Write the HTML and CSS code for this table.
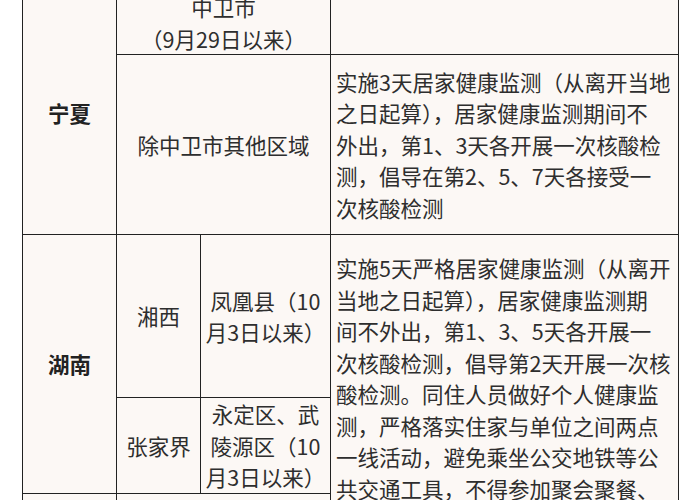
FILE: index.html
```html
<!DOCTYPE html>
<html lang="zh-CN">
<head>
<meta charset="utf-8">
<title>各地健康监测措施</title>
<link rel="stylesheet" href="styles.css">
</head>
<body>
<div class="page">
  <table class="policy">
    <colgroup>
      <col class="c-prov">
      <col class="c-city">
      <col class="c-area">
      <col class="c-text">
    </colgroup>
    <tbody>
      <tr class="r-a">
        <td class="prov" rowspan="2">宁夏</td>
        <td colspan="2">中卫市<br>（9月29日以来）</td>
        <td class="txt"></td>
      </tr>
      <tr class="r-b">
        <td colspan="2">除中卫市其他区域</td>
        <td class="txt">实施3天居家健康监测（从离开当地<br>之日起算），居家健康监测期间不<br>外出，第1、3天各开展一次核酸检<br>测，倡导在第2、5、7天各接受一<br>次核酸检测</td>
      </tr>
      <tr class="r-c">
        <td class="prov" rowspan="2">湖南</td>
        <td>湘西</td>
        <td>凤凰县（10<br>月3日以来）</td>
        <td class="txt top" rowspan="3">实施5天严格居家健康监测（从离开<br>当地之日起算），居家健康监测期<br>间不外出，第1、3、5天各开展一<br>次核酸检测，倡导第2天开展一次核<br>酸检测。同住人员做好个人健康监<br>测，严格落实住家与单位之间两点<br>一线活动，避免乘坐公交地铁等公<br>共交通工具，不得参加聚会聚餐、<br>聚集性活动</td>
      </tr>
      <tr class="r-d">
        <td>张家界</td>
        <td>永定区、武<br>陵源区（10<br>月3日以来）</td>
      </tr>
      <tr class="r-e">
        <td class="prov"></td>
        <td colspan="2"></td>
      </tr>
    </tbody>
  </table>
</div>
</body>
</html>
```

FILE: styles.css
```css
html, body {
  margin: 0;
  padding: 0;
  background: #ffffff;
}

.page {
  padding-left: 22px;
  margin-top: -10px;
}

.policy {
  border-collapse: collapse;
  table-layout: fixed;
  width: 656px;
  background: #fcf8f5;
  font-family: "Noto Sans CJK SC", "Noto Sans", sans-serif;
  font-size: 21.5px;
  line-height: 31.5px;
  color: #2e2e2e;
}

.c-prov { width: 94px; }
.c-city { width: 84px; }
.c-area { width: 130px; }
.c-text { width: 348px; }

.policy td {
  border: 1px solid #222222;
  padding: 0 3px;
  text-align: center;
  vertical-align: middle;
  white-space: nowrap;
}

.policy td.txt {
  text-align: left;
  padding: 0 2px 0 5px;
}

.policy td.top {
  vertical-align: top;
  padding-top: 17px;
}

.policy td.prov {
  font-weight: bold;
  color: #222222;
}

.r-a { height: 63px; }
.r-b { height: 180px; }
.r-c { height: 163px; }
.r-d { height: 95px; }
.r-e { height: 160px; }
```
